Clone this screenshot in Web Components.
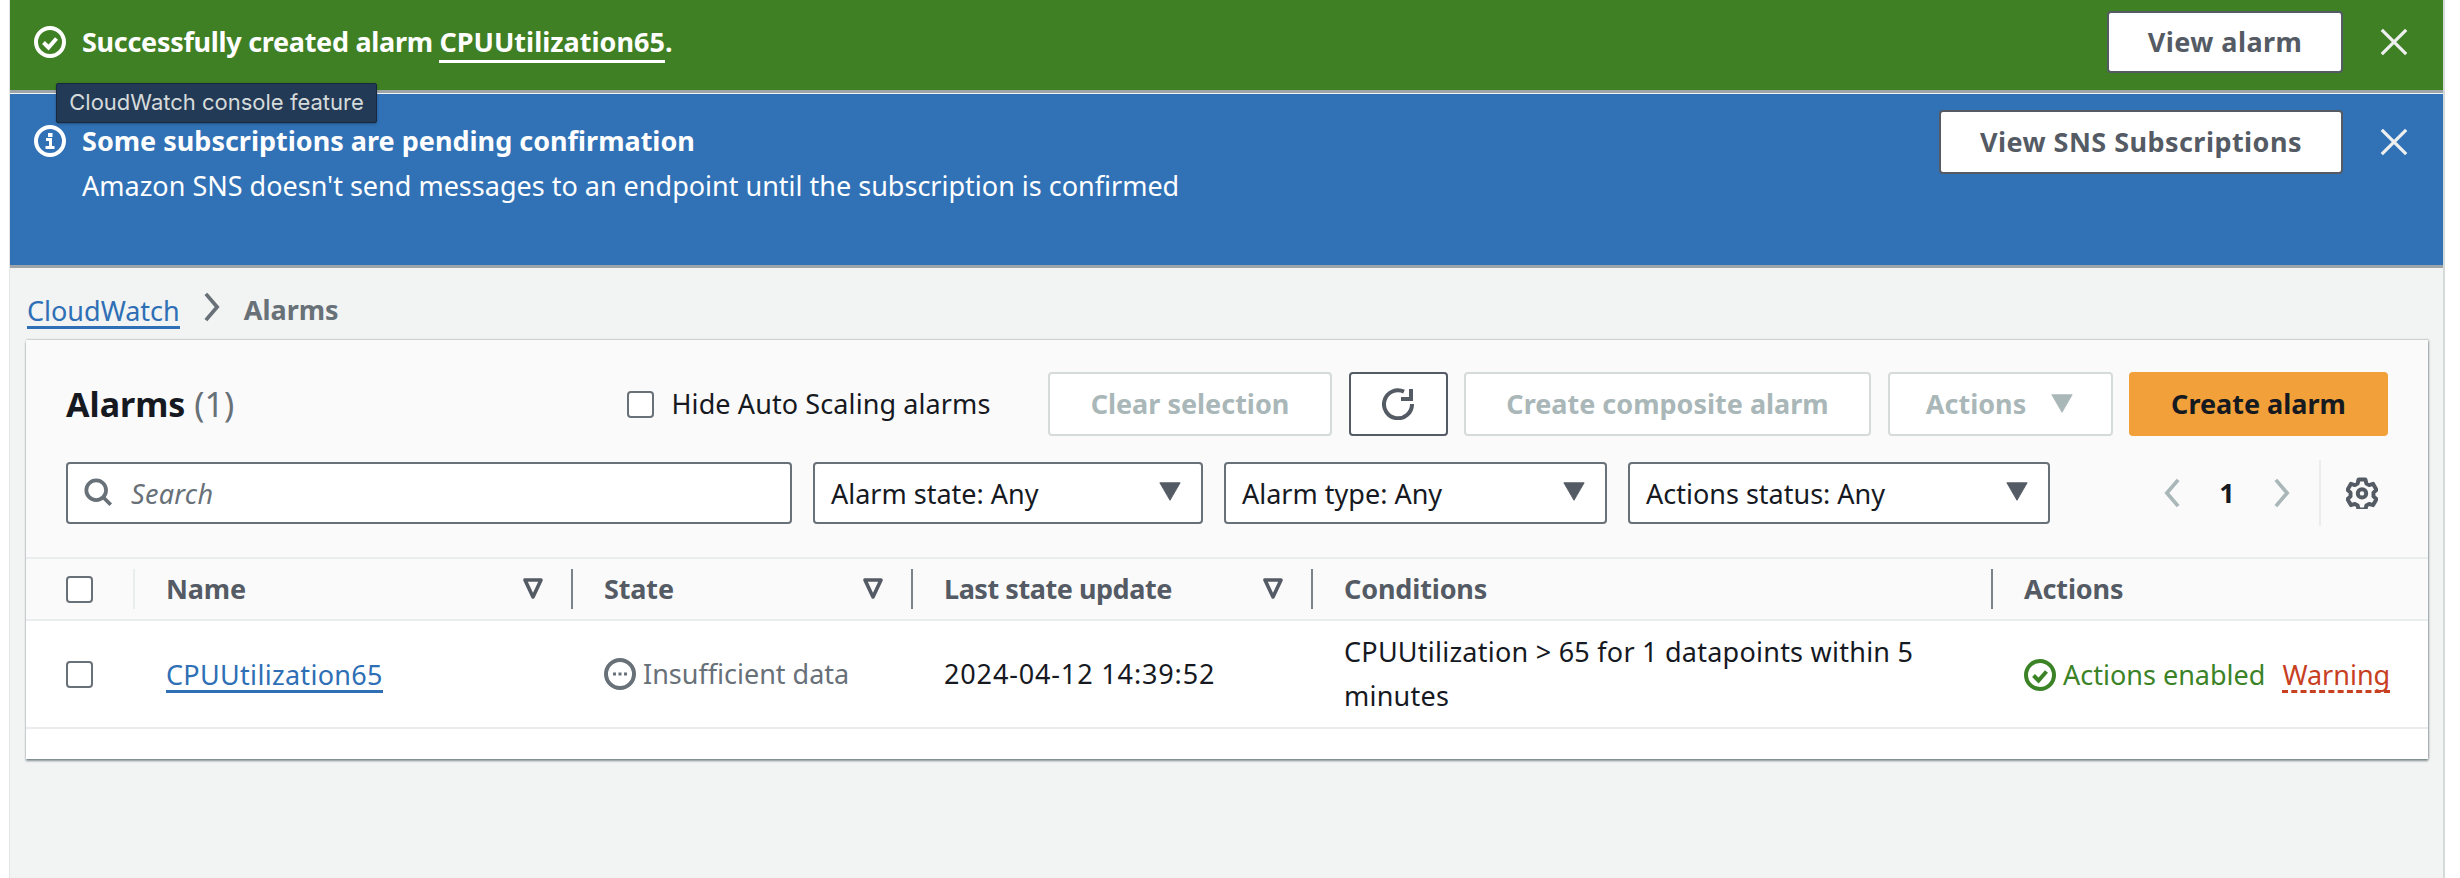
<!DOCTYPE html>
<html lang="en">
<head>
<meta charset="utf-8">
<title>Alarms</title>
<style>
  html, body { margin: 0; padding: 0; background: #fff; }
  body { width: 2460px; height: 878px; overflow: hidden; font: 400 27px/32px "Noto Sans", "Open Sans", sans-serif; color: #16191f; }
</style>
</head>
<body>
<alarms-page></alarms-page>

<script>
// --- Shared icons (32px box) ---
const ICONS = {
  ok: '<circle cx="16" cy="16" r="14" fill="none" stroke="currentColor" stroke-width="4"/><path d="M9.5 16.5l5 5 8-9" fill="none" stroke="currentColor" stroke-width="4"/>',
  info: '<circle cx="16" cy="16" r="14" fill="none" stroke="currentColor" stroke-width="4"/><rect x="14" y="8" width="4.5" height="4" fill="currentColor"/><path d="M12 14.5h4.5v7M11.5 22.5h9" fill="none" stroke="currentColor" stroke-width="3"/>',
  close: '<path d="M3 3l26 26M29 3L3 29" fill="none" stroke="currentColor" stroke-width="3.4"/>',
  pending: '<circle cx="16" cy="16" r="14" fill="none" stroke="currentColor" stroke-width="4"/><path d="M9 14.5h3v3H9zM14.5 14.5h3v3h-3zM20 14.5h3v3h-3z" fill="currentColor"/>',
  refresh: '<path d="M22 3.6A14 14 0 1 0 30 16" fill="none" stroke="currentColor" stroke-width="4"/><path d="M29 1v10H19" fill="none" stroke="currentColor" stroke-width="4"/>',
  search: '<circle cx="13" cy="13" r="10.5" fill="none" stroke="currentColor" stroke-width="4"/><path d="M20.5 20.5l8 8" fill="none" stroke="currentColor" stroke-width="4"/>',
  caret: '<path d="M2 6h22L13 25z" fill="currentColor" stroke="currentColor" stroke-width="1" stroke-linejoin="round"/>',
  sort: '<path d="M4 6h16L12 23z" fill="none" stroke="currentColor" stroke-width="3.6" stroke-linejoin="round"/>',
  gear: '<path d="M12.6 2.5h6.8l1 4 2.7 1.6 4-1.2 3.4 5.9-3 2.8v3.8l3 2.8-3.4 5.9-4-1.2-2.7 1.6-1 4h-6.8l-1-4-2.7-1.6-4 1.2-3.4-5.9 3-2.8v-3.8l-3-2.8 3.4-5.9 4 1.2 2.7-1.6z" fill="none" stroke="currentColor" stroke-width="4" stroke-linejoin="round"/><circle cx="16" cy="16.4" r="4.2" fill="none" stroke="currentColor" stroke-width="4"/>',
  prev: '<path d="M15 2L3 16l12 14" fill="none" stroke="currentColor" stroke-width="4"/>',
  next: '<path d="M3 2l12 14L3 30" fill="none" stroke="currentColor" stroke-width="4"/>'
};

function iconSvg(name, w, h) {
  const box = { caret: '0 0 26 32', sort: '0 0 24 30', prev: '0 0 18 32', next: '0 0 18 32' }[name] || '0 0 32 32';
  return `<svg xmlns="http://www.w3.org/2000/svg" width="${w}" height="${h}" viewBox="${box}" aria-hidden="true" style="display:block;flex:none">${ICONS[name]}</svg>`;
}

class AwsIcon extends HTMLElement {
  connectedCallback() {
    if (this.shadowRoot) return;
    const w = this.getAttribute('w') || 32;
    const h = this.getAttribute('h') || w;
    this.attachShadow({ mode: 'open' }).innerHTML = `
      <style>:host { display: inline-flex; flex: none; }</style>
      ${iconSvg(this.getAttribute('name'), w, h)}`;
  }
}
customElements.define('aws-icon', AwsIcon);

// --- Buttons ---
class AwsButton extends HTMLElement {
  constructor() {
    super();
    this.attachShadow({ mode: 'open' }).innerHTML = `
      <style>
        :host { display: inline-flex; box-sizing: border-box; height: 64px; align-items: center; justify-content: center; gap: 24px;
                background: #fff; border: 2px solid #545b64; border-radius: 4px; color: #545b64; font-weight: 700; flex: none; }
        :host([variant="disabled"]) { border-color: #d5dbdb; color: #aab7b8; }
        :host([variant="primary"]) { background: #f2a03a; border-color: #f2a03a; color: #16191f; }
        :host([variant="flash"]) { letter-spacing: .45px; }
      </style>
      <slot></slot>`;
  }
}
customElements.define('aws-button', AwsButton);

// --- Flash banner ---
class AwsFlash extends HTMLElement {
  constructor() {
    super();
    this.attachShadow({ mode: 'open' }).innerHTML = `
      <style>
        :host { display: flex; box-sizing: border-box; color: #fff; padding-left: 24px; padding-right: 34px; box-shadow: 0 3px 0 #9ea5a8; }
        :host([type="success"]) { background: #3f8024; height: 90px; margin-bottom: 4px; padding-top: 11px; }
        :host([type="info"]) { background: #3172b7; height: 171px; padding-top: 16px; }
        .icon { margin-top: 15px; }
        .icon, .body { flex: none; }
        .body { margin-left: 16px; flex: 1; padding-top: 15px; }
        .title { font-weight: 700; }
        .text { margin-top: 13px; line-height: 32px; }
        .action { flex: none; }
        .close { flex: none; margin-left: 36px; margin-top: 17px; color: #eef0f0; }
        :host([type="success"]) .close { margin-top: 16px; }
      </style>
      <div class="icon"><aws-icon name="${this.getAttribute('icon')}"></aws-icon></div>
      <div class="body">
        <div class="title"><slot name="title"></slot></div>
        <div class="text"><slot name="text"></slot></div>
      </div>
      <div class="action"><slot name="action"></slot></div>
      <div class="close"><aws-icon name="close" w="30" h="30"></aws-icon></div>`;
  }
}
customElements.define('aws-flash', AwsFlash);

// --- Breadcrumb ---
class AwsBreadcrumb extends HTMLElement {
  constructor() {
    super();
    this.attachShadow({ mode: 'open' }).innerHTML = `
      <style>
        :host { display: flex; align-items: center; height: 38px; color: #545b64; padding-left: 17px; }
        a { color: #2e6fb5; border-bottom: 3px solid #2e6fb5; line-height: 30px; padding-top: 2px; margin-top: 2px; }
        .sep { margin: 0 24px 0 23px; color: #687078; }
        b { font-weight: 700; color: #687078; }
      </style>
      <a>CloudWatch</a>
      <span class="sep"><aws-icon name="next" w="17" h="30"></aws-icon></span>
      <b>Alarms</b>`;
  }
}
customElements.define('aws-breadcrumb', AwsBreadcrumb);

// --- Filter dropdown ---
class AwsSelect extends HTMLElement {
  constructor() {
    super();
    this.attachShadow({ mode: 'open' }).innerHTML = `
      <style>
        :host { display: flex; flex: none; box-sizing: border-box; height: 62px; align-items: center; justify-content: space-between;
                background: #fff; border: 2px solid #687078; border-radius: 4px; padding: 0 19px 0 16px; }
        span { padding-top: 2px; }
        aws-icon { color: #545b64; margin-top: -2px; }
      </style>
      <span><slot></slot></span>
      <aws-icon name="caret" w="24" h="30"></aws-icon>`;
  }
}
customElements.define('aws-select', AwsSelect);

class AwsCheckbox extends HTMLElement {
  constructor() {
    super();
    this.attachShadow({ mode: 'open' }).innerHTML = `
      <style>
        :host { display: block; flex: none; box-sizing: border-box; width: 27px; height: 27px; background: #fff; border: 2px solid #687078; border-radius: 4px; }
      </style>`;
  }
}
customElements.define('aws-checkbox', AwsCheckbox);

// --- Table ---
class AlarmTable extends HTMLElement {
  constructor() {
    super();
    this.attachShadow({ mode: 'open' }).innerHTML = `
      <style>
        :host { display: grid; grid-template-columns: 107px 438px 340px 400px 680px 437px; background: #fff; }
        .th, .td { display: flex; align-items: center; box-sizing: border-box; padding-left: 33px; position: relative; }
        .th { height: 64px; padding-right: 26px; justify-content: space-between; background: #fafafa; border-top: 2px solid #eaeded; border-bottom: 2px solid #eaeded;
              color: #545b64; font-weight: 700; letter-spacing: -.15px; }
        .th.sel, .td.sel { padding-left: 40px; }
        .th + .th::before { content: ""; position: absolute; left: 0; top: 10px; bottom: 10px; width: 2px; background: #7b838a; }
        .th.sel + .th::before { background: #eaeded; }
        .th.tight { letter-spacing: -.45px; }
        .td { height: 108px; border-bottom: 2px solid #eaeded; }
        .gray { color: #687078; gap: 7px; }
        .date { letter-spacing: .85px; }
        .cond { line-height: 44px; padding-right: 50px; align-self: stretch; letter-spacing: .24px; }
        .link { color: #2e6fb5; border-bottom: 3px solid #2e6fb5; line-height: 30px; margin-top: 5px; letter-spacing: .3px; }
        .status { padding-top: 2px; }
        .green { display: flex; align-items: center; color: #3b8326; gap: 7px; }
        .warn { color: #c7401f; border-bottom: 3px dashed #c7401f; line-height: 30px; margin-left: 17px; margin-top: 2px; }
        .filler { grid-column: 1 / -1; height: 30px; background: #fff; }
      </style>
      <div class="th sel"><aws-checkbox></aws-checkbox></div>
      <div class="th">Name <aws-icon name="sort" w="24" h="30"></aws-icon></div>
      <div class="th">State <aws-icon name="sort" w="24" h="30"></aws-icon></div>
      <div class="th tight">Last state update <aws-icon name="sort" w="24" h="30"></aws-icon></div>
      <div class="th">Conditions</div>
      <div class="th">Actions</div>

      <div class="td sel"><aws-checkbox></aws-checkbox></div>
      <div class="td"><span class="link">CPUUtilization65</span></div>
      <div class="td gray"><aws-icon name="pending"></aws-icon>Insufficient data</div>
      <div class="td"><span class="date">2024-04-12 14:39:52</span></div>
      <div class="td cond">CPUUtilization &gt; 65 for 1 datapoints within 5 minutes</div>
      <div class="td status"><span class="green"><aws-icon name="ok"></aws-icon>Actions enabled</span><span class="warn">Warning</span></div>
      <div class="filler"></div>`;
  }
}
customElements.define('alarm-table', AlarmTable);

// --- Alarms panel ---
class AlarmsPanel extends HTMLElement {
  constructor() {
    super();
    this.attachShadow({ mode: 'open' }).innerHTML = `
      <style>
        :host { display: block; background: #fafafa; box-shadow: 0 2px 2px rgba(0,28,36,.45), 1px 0 2px rgba(0,28,36,.25), 0 -1px 1px rgba(0,28,36,.08); }
        .head { display: flex; align-items: center; padding: 32px 40px 0; gap: 16.5px; }
        h2 { margin: 0 auto 0 0; font-size: 34px; line-height: 64px; font-weight: 700; }
        h2 span { font-weight: 400; color: #687078; }
        .hide { display: flex; align-items: center; gap: 17px; margin-right: 41px; letter-spacing: .1px; }
        .filters { display: flex; align-items: center; padding: 26px 50px 33px 40px; gap: 21px; }
        .search { display: flex; align-items: center; flex: none; box-sizing: border-box; width: 726px; height: 62px; background: #fff; border: 2px solid #687078; border-radius: 4px; padding-left: 16px; gap: 17px; color: #687078; }
        .search aws-icon { color: #687078; }
        .search i { font-style: italic; padding-top: 2px; letter-spacing: .3px; }
        .pager { display: flex; align-items: center; margin-left: auto; height: 62px; color: #aab7b8; }
        .pager b { color: #16191f; width: 92px; text-align: center; }
        .pager .rule { width: 2px; height: 66px; background: #eaeded; margin: 0 25px 0 29px; }
        .pager .gear { color: #545b64; }
      </style>
      <div class="head">
        <h2>Alarms <span>(1)</span></h2>
        <div class="hide"><aws-checkbox></aws-checkbox><span>Hide Auto Scaling alarms</span></div>
        <aws-button variant="disabled" style="width:284px">Clear selection</aws-button>
        <aws-button style="width:99px"><aws-icon name="refresh" w="32" h="32"></aws-icon></aws-button>
        <aws-button variant="disabled" style="width:407px">Create composite alarm</aws-button>
        <aws-button variant="disabled" style="width:225px">Actions <aws-icon name="caret" w="24" h="30"></aws-icon></aws-button>
        <aws-button variant="primary" style="width:259px">Create alarm</aws-button>
      </div>
      <div class="filters">
        <div class="search"><aws-icon name="search" w="30" h="30"></aws-icon><i>Search</i></div>
        <aws-select style="width:390px">Alarm state: Any</aws-select>
        <aws-select style="width:383px">Alarm type: Any</aws-select>
        <aws-select style="width:422px">Actions status: Any</aws-select>
        <div class="pager">
          <aws-icon name="prev" w="17" h="30"></aws-icon>
          <b>1</b>
          <aws-icon name="next" w="17" h="30"></aws-icon>
          <div class="rule"></div>
          <aws-icon class="gear" name="gear" w="32" h="32"></aws-icon>
        </div>
      </div>
      <alarm-table></alarm-table>`;
  }
}
customElements.define('alarms-panel', AlarmsPanel);

// --- Page ---
class AlarmsPage extends HTMLElement {
  constructor() {
    super();
    this.attachShadow({ mode: 'open' }).innerHTML = `
      <style>
        :host { display: block; position: relative; box-sizing: border-box; width: 2436px; height: 878px; margin-left: 9px; background: #f2f3f3; border-right: 2px solid #d5dbdb; border-left: 1px solid #e4e6e6; }
        .flash-stack { display: block; }
        .crumbs { padding-top: 26px; }
        .content { padding: 11px 15px 0 16px; }
        .tip { position: absolute; left: 46px; top: 83px; box-sizing: border-box; width: 321px; height: 40px; background: #233a56; border: 1px solid #16293f; border-radius: 2px;
               color: #d5dbdb; font: 400 22px/37px Inter, "Noto Sans", sans-serif; text-align: center; box-shadow: 0 1px 3px rgba(0,0,0,.3); }
        .u { border-bottom: 3px solid #fff; }
        .lead { letter-spacing: -.3px; }
      </style>
      <div class="flash-stack">
        <aws-flash type="success" icon="ok">
          <span slot="title"><span class="lead">Successfully created alarm </span><span class="u">CPUUtilization65</span>.</span>
          <aws-button slot="action" variant="flash" style="width:236px;height:62px">View alarm</aws-button>
        </aws-flash>
        <aws-flash type="info" icon="info">
          <span slot="title">Some subscriptions are pending confirmation</span>
          <span slot="text">Amazon SNS doesn't send messages to an endpoint until the subscription is confirmed</span>
          <aws-button slot="action" variant="flash" style="width:404px">View SNS Subscriptions</aws-button>
        </aws-flash>
      </div>
      <div class="crumbs"><aws-breadcrumb></aws-breadcrumb></div>
      <div class="content"><alarms-panel></alarms-panel></div>
      <div class="tip" role="tooltip">CloudWatch console feature</div>`;
  }
}
customElements.define('alarms-page', AlarmsPage);
</script>
</body>
</html>
